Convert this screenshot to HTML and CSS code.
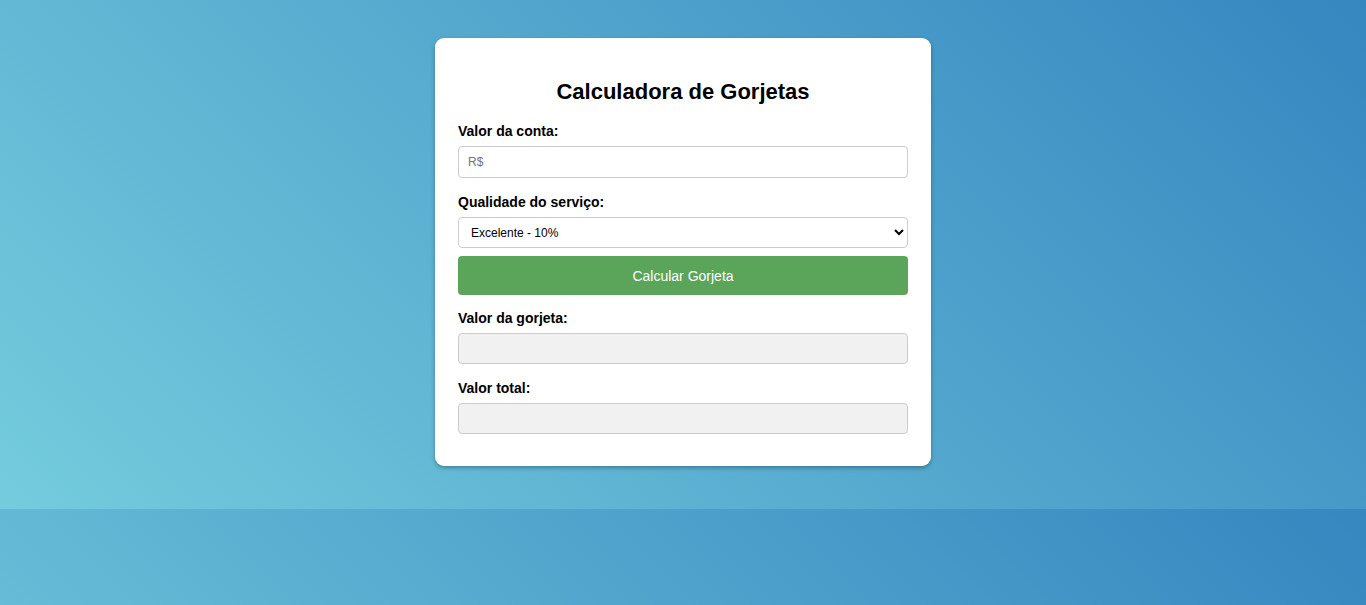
FILE: index.html
```html
<!DOCTYPE html>
<html lang="pt-BR">
<head>
<meta charset="UTF-8">
<meta name="viewport" content="width=device-width, initial-scale=1">
<title>Calculadora de Gorjetas</title>
<link rel="stylesheet" href="styles.css">
</head>
<body>
<main class="card">
<h1 class="title">Calculadora de Gorjetas</h1>
<form class="form">
<label class="label" for="bill">Valor da conta:</label>
<input class="field bill" id="bill" type="text" placeholder="R$">
<label class="label" for="service">Qualidade do serviço:</label>
<select class="field select" id="service">
<option>Excelente - 10%</option>
<option>Bom - 8%</option>
<option>Ruim - 2%</option>
</select>
<button class="button" type="button">Calcular Gorjeta</button>
<label class="label" for="tip">Valor da gorjeta:</label>
<input class="field result" id="tip" type="text" readonly>
<label class="label" for="total">Valor total:</label>
<input class="field result" id="total" type="text" readonly>
</form>
</main>
</body>
</html>
```
FILE: styles.css
```css
* {
  box-sizing: border-box;
}

body {
  margin: 0;
  padding: 38px 16px 43px;
  font-family: "Liberation Sans", Arial, sans-serif;
  background: linear-gradient(45deg, #74ccdd, #3686c0);
}

.card {
  max-width: 496px;
  margin: 0 auto;
  padding: 41px 23px 32px;
  background: #fff;
  border-radius: 9px;
  box-shadow: 0 2px 4px rgba(0, 0, 0, 0.3);
}

.title {
  margin: 0 0 18px;
  font-size: 22px;
  line-height: 26px;
  text-align: center;
}

.form {
  display: flex;
  flex-direction: column;
}

.label {
  margin-bottom: 7px;
  font-size: 14px;
  font-weight: bold;
  line-height: 16px;
}

.field {
  width: 100%;
  height: 31px;
  margin-bottom: 16px;
  padding: 0 9px;
  border: 1px solid #ccc;
  border-radius: 4px;
  background: #fff;
  color: #000;
  font-family: inherit;
  font-size: 12px;
}

.field::placeholder {
  color: #757575;
}

.bill {
  height: 32px;
}

.select {
  padding: 0 8px;
  margin-bottom: 8px;
}

.button {
  height: 39px;
  margin-bottom: 15px;
  border: 0;
  border-radius: 4px;
  background: #5aa55a;
  color: #fff;
  font-family: inherit;
  font-size: 14px;
  cursor: pointer;
}

.result {
  background: #f1f1f1;
}

.result:last-child {
  margin-bottom: 0;
}
```
